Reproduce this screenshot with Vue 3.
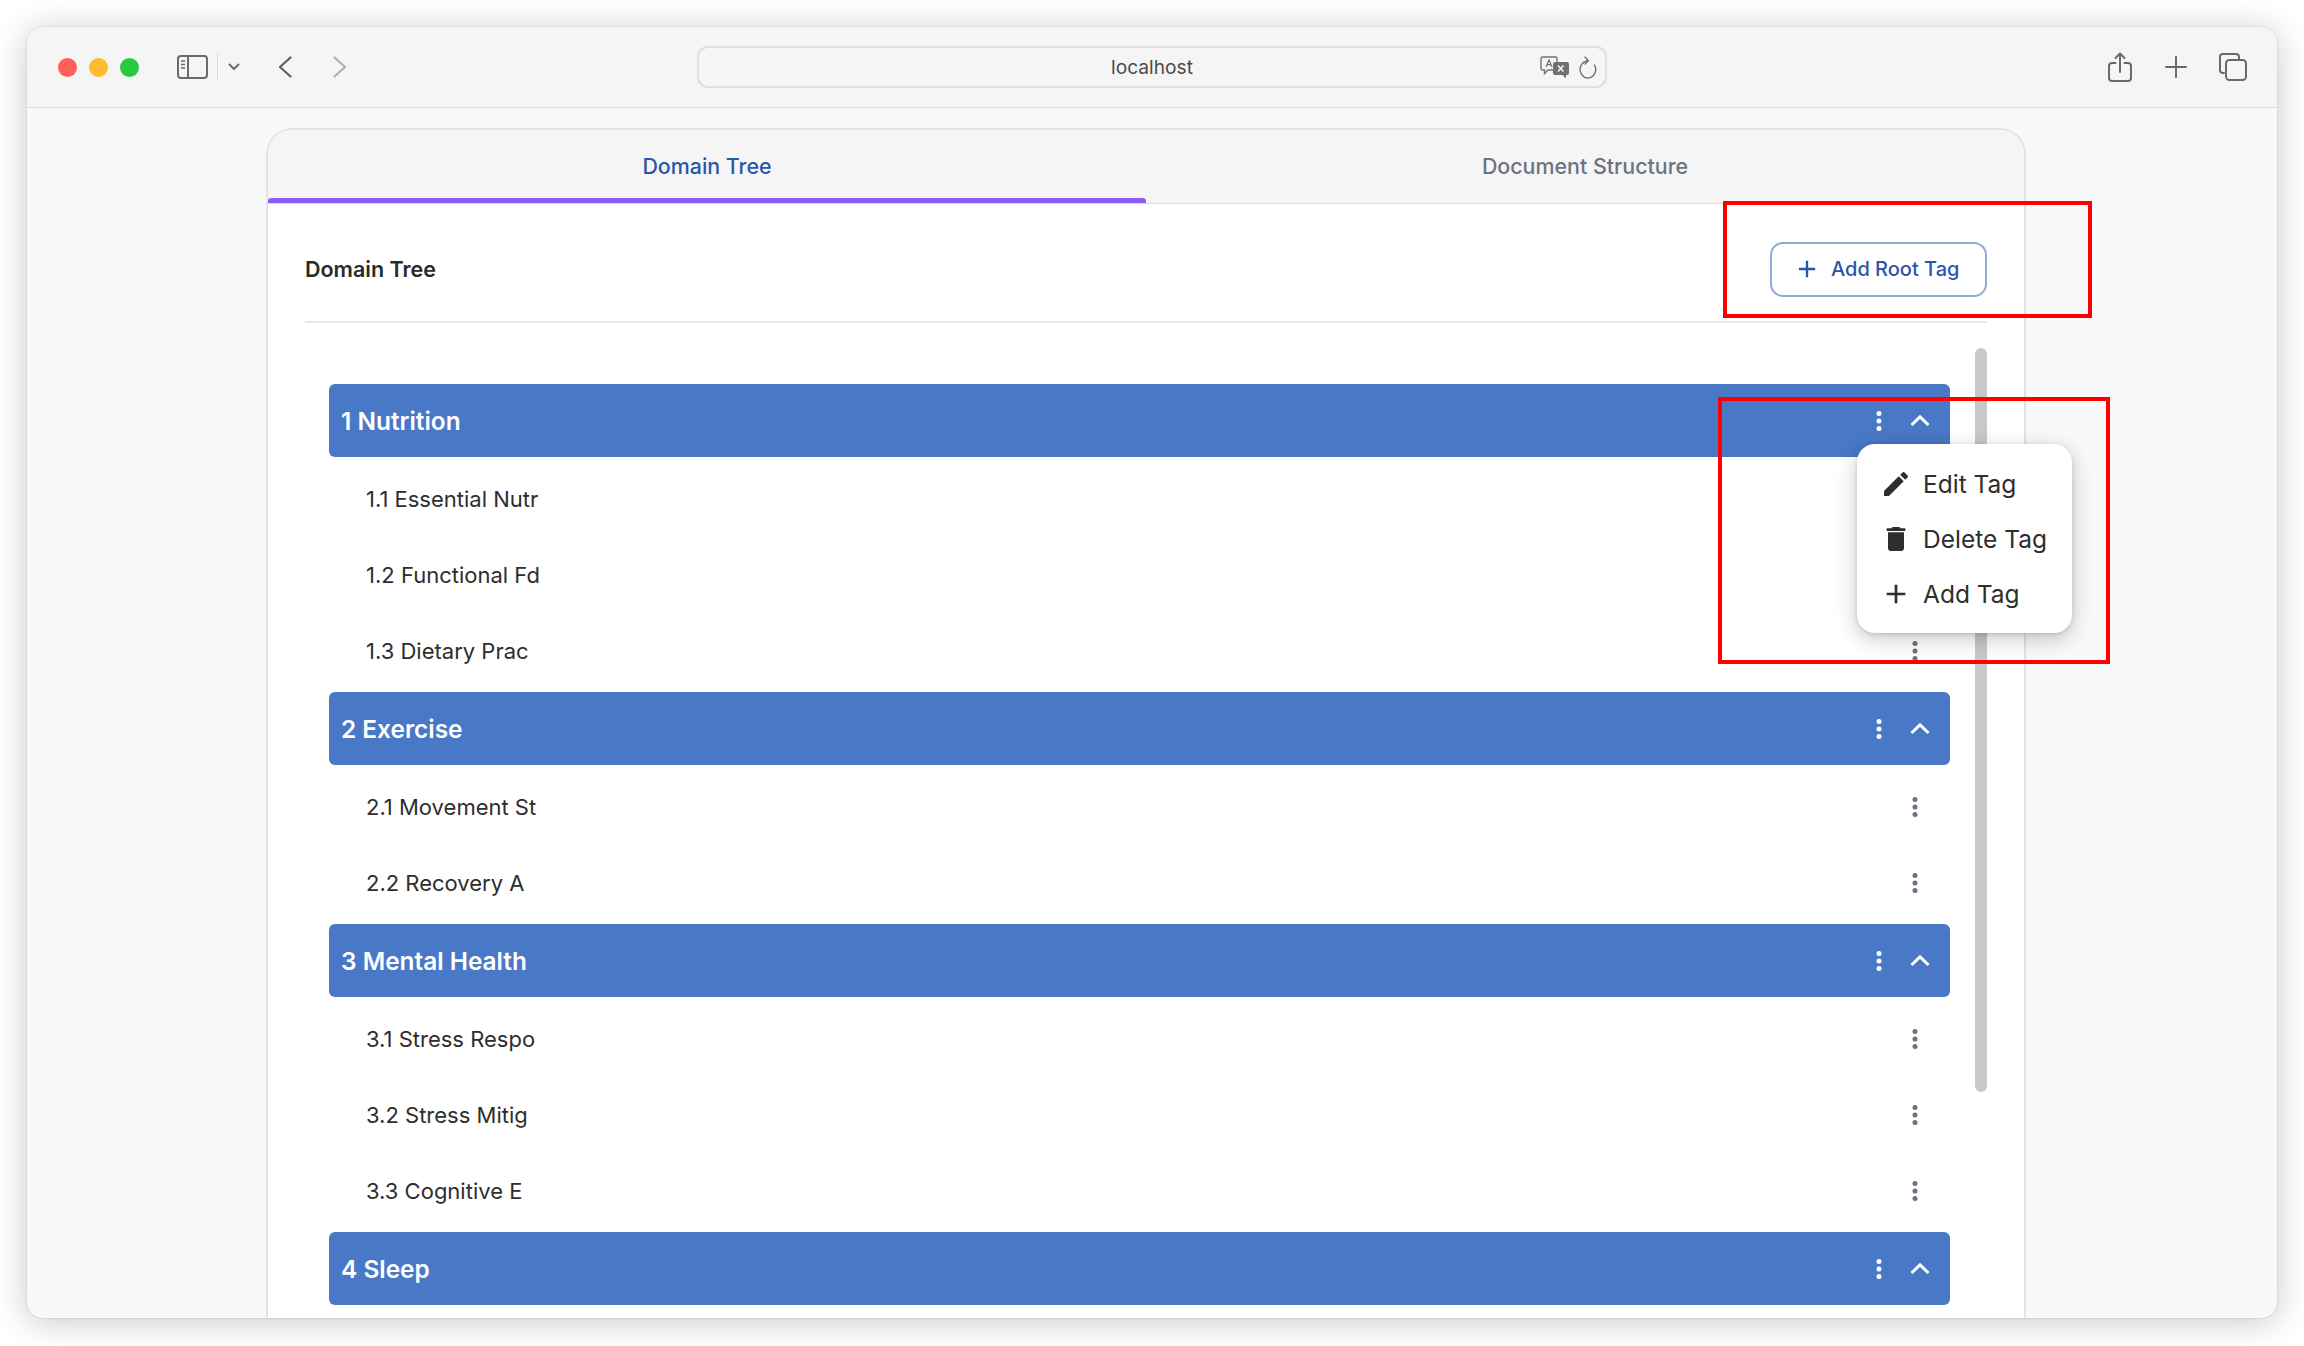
<script setup>
const groups = [
  { title: '1 Nutrition', items: ['1.1 Essential Nutr', '1.2 Functional Fd', '1.3 Dietary Prac'] },
  { title: '2 Exercise', items: ['2.1 Movement St', '2.2 Recovery A'] },
  { title: '3 Mental Health', items: ['3.1 Stress Respo', '3.2 Stress Mitig', '3.3 Cognitive E'] },
  { title: '4 Sleep', items: [] },
]
</script>

<template>
  <div class="page">
    <div class="window">
      <header class="toolbar">
        <div class="lights">
          <span class="light red"></span>
          <span class="light yellow"></span>
          <span class="light green"></span>
        </div>
        <svg class="tb sidebar" width="31" height="24" viewBox="0 0 31 24" fill="none" stroke="#6a6a6a" stroke-width="2">
          <rect x="1" y="1" width="29" height="22" rx="3" />
          <path d="M11 1v22" />
          <path d="M4 6h4M4 9.500h4M4 13h4" stroke-width="1.500" />
        </svg>
        <span class="tb-sep"></span>
        <svg class="tb drop" width="12" height="8" viewBox="0 0 12 8" fill="none" stroke="#6a6a6a" stroke-width="2" stroke-linecap="round" stroke-linejoin="round">
          <path d="M1.500 1.500 6 6l4.500-4.500" />
        </svg>
        <svg class="tb back" width="14" height="22" viewBox="0 0 14 22" fill="none" stroke="#606060" stroke-width="2.200" stroke-linecap="round" stroke-linejoin="round">
          <path d="M12.500 1.500 2 11l10.500 9.500" />
        </svg>
        <svg class="tb forward" width="14" height="22" viewBox="0 0 14 22" fill="none" stroke="#b0b0b0" stroke-width="2.200" stroke-linecap="round" stroke-linejoin="round">
          <path d="M1.500 1.500 12 11 1.500 20.500" />
        </svg>
        <div class="url">
          <span class="url-text">localhost</span>
          <svg class="translate" width="30" height="23" viewBox="0 0 30 23">
            <path d="M2.500 1h13a1.500 1.500 0 0 1 1.500 1.500v10a1.500 1.500 0 0 1-1.500 1.500H8l-3.500 3.500V14h-2A1.500 1.500 0 0 1 1 12.500v-10A1.500 1.500 0 0 1 2.500 1z" fill="#f5f5f5" stroke="#707070" stroke-width="1.400" />
            <path d="M6 11l3-7 3 7M7.200 8.600h3.600" fill="none" stroke="#707070" stroke-width="1.200" />
            <path d="M15 6h12a2 2 0 0 1 2 2v9a2 2 0 0 1-2 2h-1v3.500L22.500 19H15a2 2 0 0 1-2-2V8a2 2 0 0 1 2-2z" fill="#707070" />
            <path d="M18 9.500l5.500 6M23.500 9.500l-5.500 6" fill="none" stroke="#f5f5f5" stroke-width="1.600" />
          </svg>
          <svg class="reload" width="18" height="23" viewBox="0 0 18 23" fill="none" stroke="#707070" stroke-width="1.400" stroke-linecap="round" stroke-linejoin="round">
            <path d="M8.500 5A7.800 8.500 0 1 0 15.500 9" />
            <path d="M6 1 9.500 4.800 6 8" />
          </svg>
        </div>
        <svg class="tb share" width="24" height="30" viewBox="0 0 24 30" fill="none" stroke="#6a6a6a" stroke-width="2" stroke-linecap="round" stroke-linejoin="round">
          <path d="M7.500 11H4a3 3 0 0 0-3 3v12a3 3 0 0 0 3 3h16a3 3 0 0 0 3-3V14a3 3 0 0 0-3-3h-3.500" />
          <path d="M12 20V2M7.500 6 12 1.500 16.500 6" />
        </svg>
        <svg class="tb newtab" width="22" height="22" viewBox="0 0 22 22" fill="none" stroke="#6a6a6a" stroke-width="2" stroke-linecap="round">
          <path d="M11 1v20M1 11h20" />
        </svg>
        <svg class="tb tabsicon" width="28" height="28" viewBox="0 0 28 28" fill="none" stroke="#6a6a6a" stroke-width="2">
          <path d="M5 20H4a3 3 0 0 1-3-3V4a3 3 0 0 1 3-3h13a3 3 0 0 1 3 3v2" stroke-linecap="round" />
          <rect x="7" y="7" width="20" height="20" rx="3.500" />
        </svg>
      </header>

      <main class="content">
        <section class="card">
          <nav class="tabs">
            <div class="tab active">Domain Tree</div>
            <div class="tab">Document Structure</div>
          </nav>
          <div class="card-body">
            <div class="head">
              <h2 class="head-title">Domain Tree</h2>
              <button class="add-root">
                <svg width="28" height="28" viewBox="0 0 24 24" fill="currentColor">
                  <path d="M19 13h-6v6h-2v-6H5v-2h6V5h2v6h6v2z" />
                </svg>
                <span>Add Root Tag</span>
              </button>
            </div>
            <div class="tree-wrap">
              <div class="tree">
                <div v-for="g in groups" :key="g.title" class="group">
                  <div class="group-head">
                    <span class="group-title">{{ g.title }}</span>
                    <svg class="kebab" width="24" height="24" viewBox="0 0 24 24" fill="#fff">
                      <circle cx="12" cy="4.400" r="2.500" /><circle cx="12" cy="12" r="2.500" /><circle cx="12" cy="19.600" r="2.500" />
                    </svg>
                    <svg class="chev" width="30" height="30" viewBox="0 0 30 30" fill="none" stroke="#fff" stroke-width="3">
                      <path d="M6.500 19 15 10.800 23.500 19" />
                    </svg>
                  </div>
                  <div v-for="item in g.items" :key="item" class="item">
                    <span>{{ item }}</span>
                    <svg class="item-kebab" width="24" height="24" viewBox="0 0 24 24" fill="#6b7280">
                      <circle cx="12" cy="4.400" r="2.500" /><circle cx="12" cy="12" r="2.500" /><circle cx="12" cy="19.600" r="2.500" />
                    </svg>
                  </div>
                </div>
              </div>
              <div class="scrollbar"></div>
            </div>
          </div>
        </section>
      </main>

      <div class="menu">
        <div class="menu-item">
          <svg width="32" height="32" viewBox="0 0 24 24" fill="#2e2e2e"><path d="M3 17.250V21h3.750L17.810 9.940l-3.750-3.750L3 17.250zM20.710 7.040c.39-.39.39-1.020 0-1.410l-2.340-2.340c-.39-.39-1.020-.39-1.410 0l-1.830 1.830 3.750 3.750 1.830-1.830z" /></svg>
          <span>Edit Tag</span>
        </div>
        <div class="menu-item">
          <svg width="32" height="32" viewBox="0 0 24 24" fill="#2e2e2e"><path d="M6 19c0 1.100.9 2 2 2h8c1.100 0 2-.9 2-2V7H6v12zM19 4h-3.500l-1-1h-5l-1 1H5v2h14V4z" /></svg>
          <span>Delete Tag</span>
        </div>
        <div class="menu-item">
          <svg width="32" height="32" viewBox="0 0 24 24" fill="#2e2e2e"><path d="M19 13h-6v6h-2v-6H5v-2h6V5h2v6h6v2z" /></svg>
          <span>Add Tag</span>
        </div>
      </div>
    </div>

    <div class="mark mark-a"></div>
    <div class="mark mark-b"></div>
  </div>
</template>

<style>
html, body { margin: 0; background: #fff; overflow: hidden; }
</style>

<style scoped>
* { box-sizing: border-box; }
.page {
  position: relative;
  width: 2304px;
  height: 1346px;
  padding: 27px 27px 28px;
  font-family: Inter, "Liberation Sans", sans-serif;
  background: #fff;
  overflow: hidden;
}
.window {
  position: relative;
  height: 100%;
  border-radius: 16px;
  overflow: hidden;
  display: flex;
  flex-direction: column;
  background: #f8f9fb;
  box-shadow: 0 0 2px rgba(0,0,0,.2), 0 4px 34px rgba(0,0,0,.22);
}
.toolbar {
  flex: none;
  height: 81px;
  display: flex;
  align-items: center;
  padding-left: 31px;
  background: #f5f5f5;
  border-bottom: 1.500px solid #dedede;
}
.lights { display: flex; gap: 12px; }
.light { width: 19px; height: 19px; border-radius: 50%; display: block; }
.red { background: #ff5f57; }
.yellow { background: #febc2e; }
.green { background: #28c840; }
.tb { flex: none; display: block; }
.sidebar { margin-left: 38px; }
.tb-sep { width: 1px; height: 28px; background: #dcdcdc; margin-left: 9px; }
.drop { margin-left: 10px; }
.back { margin-left: 38px; }
.forward { margin-left: 41px; }
.url {
  position: relative;
  margin-left: 350px;
  width: 910px;
  height: 42px;
  flex: none;
  display: flex;
  align-items: center;
  justify-content: center;
  border: 2px solid #dfdfdf;
  border-radius: 11px;
  background: #f5f5f5;
}
.url-text { font-size: 19.200px; color: #4a4a4a; }
.translate { position: absolute; right: 35px; top: 8px; }
.reload { position: absolute; right: 8px; top: 8px; }
.share { margin-left: 501px; }
.newtab { margin-left: 33px; }
.tabsicon { margin-left: 32px; }
.content {
  flex: 1;
  min-height: 0;
  padding: 20px 251px 0 239px;
  overflow: hidden;
}
.card {
  height: 1240px;
  border: 2px solid #e3e3e3;
  border-bottom: 0;
  border-radius: 26px 26px 0 0;
  background: #fff;
  overflow: hidden;
}
.tabs {
  height: 74px;
  display: flex;
  background: #f5f5f5;
  border-bottom: 1.500px solid #dcdcdc;
}
.tab {
  position: relative;
  flex: 1;
  display: flex;
  align-items: center;
  justify-content: center;
  padding-bottom: 2px;
  font-size: 21.400px;
  font-weight: 500;
  color: #6b7280;
}
.tab.active {
  color: #2a55a8;
}
.tab.active::after {
  content: "";
  position: absolute;
  left: 0;
  right: 0;
  bottom: 0;
  height: 5px;
  background: #8b5cf6;
  border-radius: 3px 3px 0 0;
}
.card-body { padding: 0 37px; }
.head {
  height: 119px;
  padding-top: 13px;
  display: flex;
  align-items: center;
  justify-content: space-between;
  border-bottom: 2px solid #e8e8e8;
}
.head-title {
  margin: 0;
  font-size: 21.500px;
  font-weight: 600;
  color: #2a2a2a;
}
.add-root {
  width: 217px;
  height: 55px;
  padding: 0 0 0 21px;
  display: flex;
  align-items: center;
  gap: 10px;
  border: 2px solid #8fabd9;
  border-radius: 13px;
  background: #fff;
  color: #2a55a8;
  font: 500 20px Inter, "Liberation Sans", sans-serif;
}
.add-root svg { flex: none; display: block; }
.tree-wrap { display: flex; align-items: flex-start; }
.tree { flex: 1; padding: 61px 25px 0 24px; }
.group { margin-bottom: 4px; }
.group-head {
  height: 73px;
  display: flex;
  align-items: center;
  gap: 14px;
  padding: 0 15px 0 12px;
  margin-bottom: 3px;
  background: #4878c6;
  border-radius: 6px;
  color: #fff;
}
.group-title {
  flex: 1;
  font-size: 24.400px;
  font-weight: 600;
}
.item {
  height: 76px;
  display: flex;
  align-items: center;
  justify-content: space-between;
  padding: 2px 23px 0 37px;
  font-size: 22px;
  color: #2e2e2e;
}
.kebab, .item-kebab, .chev { display: block; flex: none; }
.scrollbar {
  flex: none;
  width: 12px;
  height: 744px;
  margin-top: 25px;
  border-radius: 6px;
  background: #c8c8c8;
}
.menu {
  position: absolute;
  left: 1830px;
  top: 417px;
  width: 215px;
  height: 189px;
  padding: 12px 0;
  border-radius: 18px;
  background: #fff;
  box-shadow: 0 6px 22px rgba(0,0,0,.22), 0 1px 4px rgba(0,0,0,.14);
}
.menu-item {
  height: 55px;
  display: flex;
  align-items: center;
  gap: 11px;
  padding-left: 23px;
  font-size: 24.500px;
  color: #2e2e2e;
}
.menu-item svg { flex: none; display: block; }
.mark {
  position: absolute;
  border: 4px solid #f00;
  pointer-events: none;
}
.mark-a { left: 1723px; top: 201px; width: 369px; height: 117px; }
.mark-b { left: 1718px; top: 397px; width: 392px; height: 267px; }
</style>
